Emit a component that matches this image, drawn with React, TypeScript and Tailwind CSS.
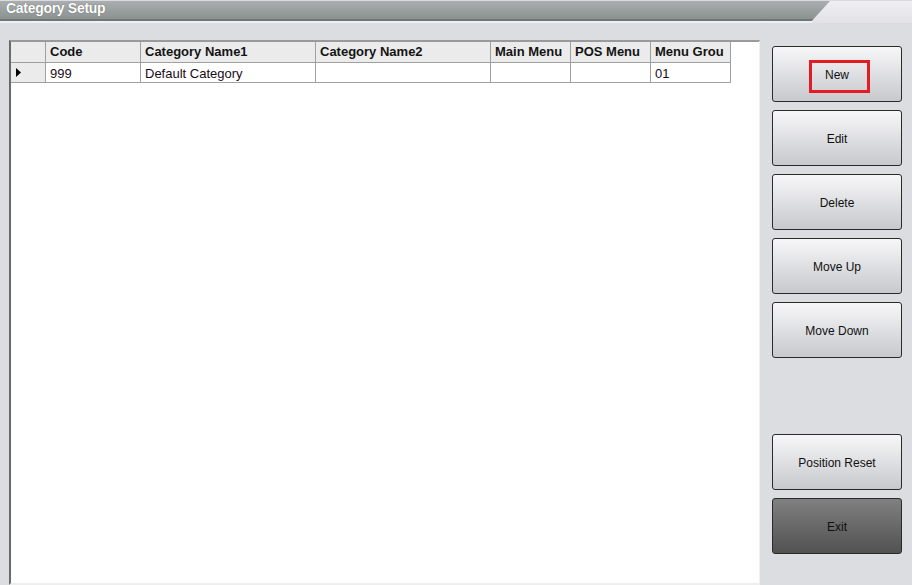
import React from 'react';

const columns = [
  { title: 'Code', width: 'w-[95px]' },
  { title: 'Category Name1', width: 'w-[175px]' },
  { title: 'Category Name2', width: 'w-[175px]' },
  { title: 'Main Menu', width: 'w-[80px]' },
  { title: 'POS Menu', width: 'w-[80px]' },
  { title: 'Menu Grou', width: 'w-[80px]' },
];

const row = ['999', 'Default Category', '', '', '', '01'];

const ActionButton: React.FC<{ label: string; dark?: boolean; highlight?: boolean }> = ({ label, dark, highlight }) => (
  <button
    className={`relative h-[56px] w-[130px] rounded-[3px] border border-[#2a2a2a] text-[12px] text-[#101010] flex items-center justify-center pt-[2px] ${
      dark ? 'bg-gradient-to-b from-[#808080] to-[#525252]' : 'bg-gradient-to-b from-[#f7f7f9] to-[#c8c9cd]'
    }`}
  >
    {highlight && <span className="absolute left-[36px] top-[13px] h-[33px] w-[61px] border-[3px] border-[#e21b25]" />}
    <span className="relative">{label}</span>
  </button>
);

export default function App() {
  return (
    <div className="h-[585px] w-[912px] overflow-hidden bg-[#dcdde1] font-['Liberation_Sans',Arial,sans-serif]">
      {/* title bar */}
      <div className="relative h-[23px] bg-gradient-to-b from-[#eeeef3] to-[#e2e2e7] border-t border-[#e0d8e0]">
        <div className="h-[20px] w-[830px] bg-gradient-to-b from-[#a9afae] to-[#8b9292] border-b-2 border-b-[#6e7676] [clip-path:polygon(0_0,100%_0,97.8%_100%,0_100%)]">
          <div className="pl-[6px] text-[14px] font-bold leading-[15px] text-white tracking-[-0.3px] [text-shadow:0_0_1px_#555]">
            Category Setup
          </div>
        </div>
        <div className="absolute left-0 top-[20px] h-[2px] w-[812px] bg-[#eef0f6]" />
      </div>

      <div className="flex pt-[17px] pl-[9px]">
        {/* grid */}
        <div className="h-[545px] w-[751px] border-t-2 border-l-2 border-t-[#9a9a9a] border-l-[#6a6a6a] border-r border-b-2 border-r-[#f0f0f0] border-b-[#eeeeee] bg-white">
          <div className="flex h-[21px] bg-[#ebebeb] w-[720px] border-b border-[#a0a0a0]">
            <div className="w-[35px] border-r border-[#a0a0a0]" />
            {columns.map((c) => (
              <div
                key={c.title}
                className={`${c.width} border-r border-[#a0a0a0] pl-[4px] text-[13px] font-bold leading-[19px] text-[#141414] whitespace-nowrap overflow-hidden`}
              >
                {c.title}
              </div>
            ))}
          </div>
          <div className="flex h-[20px] w-[720px] border-b border-[#a0a0a0]">
            <div className="flex w-[35px] items-center border-r border-[#a0a0a0] bg-[#ebebeb] pl-[5px]">
              <svg width="5" height="9" viewBox="0 0 5 9">
                <path d="M0 0 L5 4.5 L0 9 Z" fill="#000" />
              </svg>
            </div>
            {columns.map((c, i) => (
              <div
                key={c.title}
                className={`${c.width} border-r border-[#a0a0a0] pl-[4px] text-[13px] leading-[21px] text-[#1a0a1a] whitespace-nowrap`}
              >
                {row[i]}
              </div>
            ))}
          </div>
        </div>

        {/* buttons */}
        <div className="ml-[12px] flex flex-col pt-[6px]">
          <div className="flex flex-col gap-[8px]">
            <ActionButton label="New" highlight />
            <ActionButton label="Edit" />
            <ActionButton label="Delete" />
            <ActionButton label="Move Up" />
            <ActionButton label="Move Down" />
          </div>
          <div className="mt-[76px] flex flex-col gap-[8px]">
            <ActionButton label="Position Reset" />
            <ActionButton label="Exit" dark />
          </div>
        </div>
      </div>
    </div>
  );
}
